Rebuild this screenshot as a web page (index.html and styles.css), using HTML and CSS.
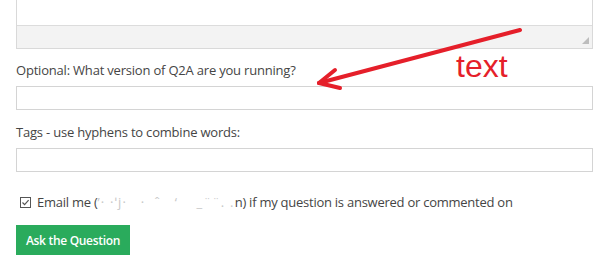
FILE: index.html
```html
<!DOCTYPE html>
<html lang="en">
<head>
    <meta charset="UTF-8">
    <title>Ask a Question</title>
    <link rel="stylesheet" href="styles.css">
</head>
<body>
    <form class="ask-form">
        <!-- Content editor (scrolled, only the bottom shows) -->
        <div class="editor">
            <div class="editor-text"></div>
            <div class="editor-bar">
                <span class="grip"></span>
            </div>
        </div>

        <label class="field-label">Optional: What version of Q2A are you running?</label>
        <input type="text" class="field-input">

        <label class="field-label tags-label">Tags - use hyphens to combine words:</label>
        <input type="text" class="field-input">

        <div class="notify-row">
            <svg class="check-icon" width="11" height="11" viewBox="0 0 11 11">
                <rect x="0.5" y="0.5" width="10" height="10" fill="none" stroke="#555" stroke-width="1"/>
                <path d="M2.5 5.5 L4.6 7.6 L8.6 3.2" fill="none" stroke="#555" stroke-width="1.2"/>
            </svg>
            <span>Email me (<span class="hidden-mail">&#8217;&#183; &#183;&#712;j&#183;&nbsp;&nbsp; &#183;&nbsp; &#710;&nbsp;&nbsp; &#8216;&nbsp;&nbsp;&nbsp; _&#168;&#168;. .</span>n) if my question is answered or commented on</span>
        </div>

        <button type="button" class="btn-ask">Ask the Question</button>
    </form>

    <!-- Annotation drawn on top of the screenshot -->
    <svg class="annotation" width="600" height="268" viewBox="0 0 600 268">
        <g stroke="#e51f2a" stroke-width="4" stroke-linecap="round" fill="none">
            <line x1="520" y1="30" x2="319" y2="83"/>
            <line x1="319" y1="83" x2="335" y2="70"/>
            <line x1="319" y1="83" x2="340" y2="88"/>
        </g>
        <text x="456" y="77" class="annotation-text">text</text>
    </svg>
</body>
</html>
```

FILE: styles.css
```css
* {
    margin: 0;
    padding: 0;
    box-sizing: border-box;
}

body {
    background: #fff;
    font-family: "Open Sans", "Noto Sans", sans-serif;
    font-size: 13px;
    color: #454545;
    position: relative;
    width: 600px;
    height: 268px;
    overflow: hidden;
}

.ask-form {
    width: 577px;
    margin-left: 16px;
    display: flex;
    flex-direction: column;
    align-items: flex-start;
}

.editor {
    width: 100%;
    border: 1px solid #d9d9d9;
    border-top: none;
}

.editor-text {
    height: 26px;
    background: #fff;
    border-bottom: 1px solid #dcdcdc;
}

.editor-bar {
    height: 22px;
    background: #f3f3f3;
    position: relative;
}

.grip {
    position: absolute;
    right: 3px;
    bottom: 4px;
    width: 0;
    height: 0;
    border-left: 7px solid transparent;
    border-bottom: 7px solid #bdbdbd;
}

.field-label {
    display: block;
    line-height: 20px;
    margin-top: 11px;
    letter-spacing: -0.2px;
}

.tags-label {
    margin-top: 12px;
}

.field-input {
    display: block;
    width: 100%;
    height: 24px;
    margin-top: 6px;
    border: 1px solid #d4d4d4;
    background: #fff;
    outline: none;
}

.notify-row {
    display: flex;
    align-items: center;
    gap: 6px;
    margin-top: 20px;
    margin-left: 4px;
    line-height: 20px;
    font-size: 13px;
    letter-spacing: -0.25px;
}

.check-icon {
    flex: none;
}

.hidden-mail {
    color: #c8c8c8;
    letter-spacing: 1.2px;
}

.btn-ask {
    margin-top: 13px;
    width: 114px;
    height: 30px;
    border: none;
    background: #2aab5c;
    color: #fff;
    font-family: "Open Sans", "Noto Sans", sans-serif;
    font-size: 12px;
    font-weight: 600;
    letter-spacing: -0.3px;
    cursor: pointer;
}

.annotation {
    position: absolute;
    left: 0;
    top: 0;
    pointer-events: none;
}

.annotation-text {
    font-family: "Liberation Sans", Arial, sans-serif;
    font-size: 32px;
    fill: #e51f2a;
}
```
